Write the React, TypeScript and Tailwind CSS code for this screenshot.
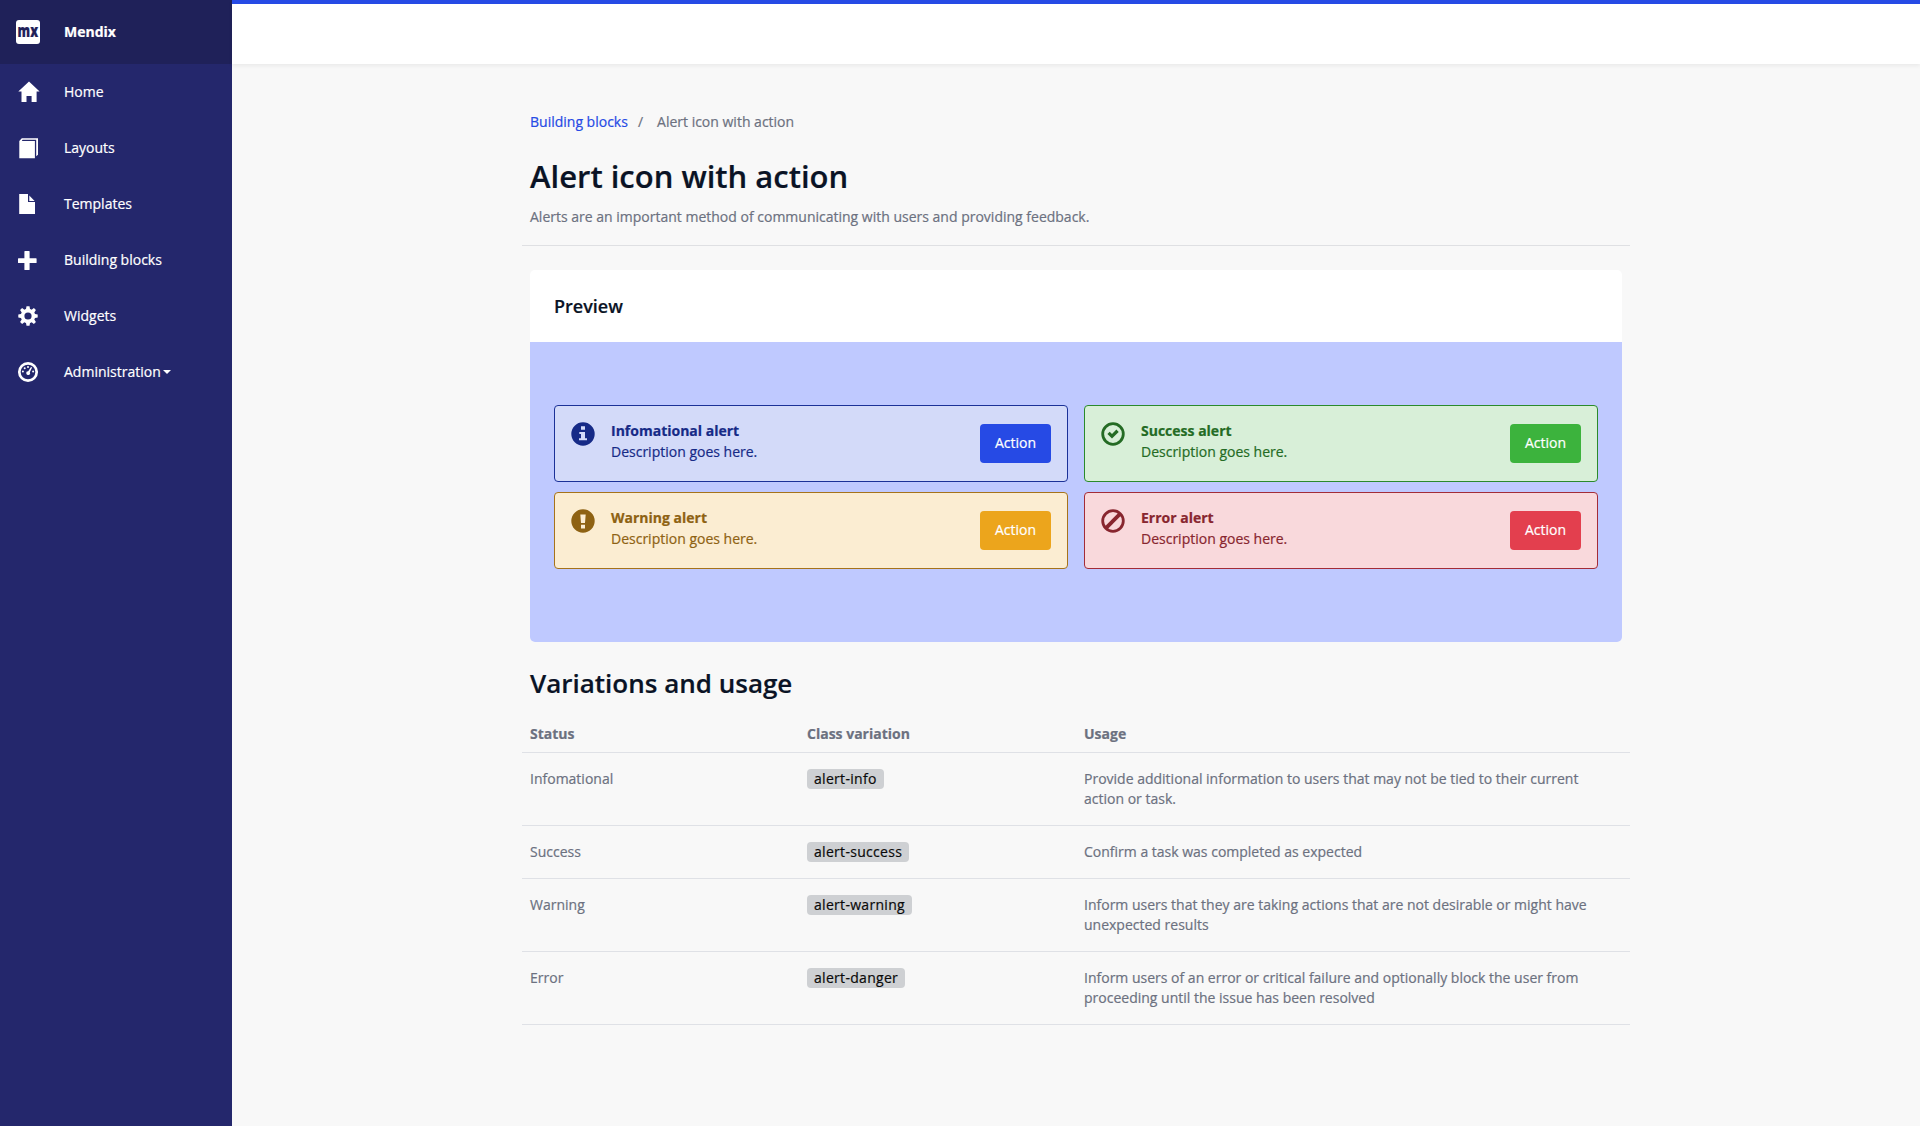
import React from "react";

const NAV_ICONS: Record<string, React.ReactNode> = {
  home: (
    <path d="M12 1.5 22.6 11.5H19.6V22H14.6V16H9.5V22H4.5V11.5H1.3Z" />
  ),
  layouts: (
    <path d="M2.3 5 4.8 2.2H21V18.8L19.2 20.3V3.8H5.6L4.8 4.9H17.9V22.2H2.3Z" />
  ),
  templates: <path d="M2.2 2H11V10H18V22H2.2ZM12.3 3.4 17.6 9H12.3Z" />,
  blocks: <path d="M8 3h4a.6.6 0 0 1 .6.6V10.2H19a.6.6 0 0 1 .6.6v3.6a.6.6 0 0 1-.6.6h-6.4v6.4a.6.6 0 0 1-.6.6H8a.6.6 0 0 1-.6-.6V15H1.6a.6.6 0 0 1-.6-.6v-3.6a.6.6 0 0 1 .6-.6H7.4V3.6A.6.6 0 0 1 8 3Z" />,
  widgets: (
    <g transform="translate(11 12)">
      <path
        fillRule="evenodd"
        d="M-1.5-9.7H1.5L2-7A7.2 7.2 0 0 1 3.6-6.3L5.9-7.9 7.9-5.9 6.3-3.6A7.2 7.2 0 0 1 7-2L9.7-1.5V1.5L7 2A7.2 7.2 0 0 1 6.3 3.6L7.9 5.9 5.9 7.9 3.6 6.3A7.2 7.2 0 0 1 2 7L1.5 9.7H-1.5L-2 7A7.2 7.2 0 0 1-3.6 6.3L-5.9 7.9-7.9 5.9-6.3 3.6A7.2 7.2 0 0 1-7 2L-9.7 1.5V-1.5L-7-2A7.2 7.2 0 0 1-6.3-3.6L-7.9-5.9-5.9-7.9-3.6-6.3A7.2 7.2 0 0 1-2-7ZM0-3.6A3.6 3.6 0 1 0 0 3.6 3.6 3.6 0 0 0 0-3.6Z"
      />
    </g>
  ),
  admin: (
    <g>
      <circle cx="11" cy="12" r="8.7" fill="none" stroke="currentColor" strokeWidth="2.7" />
      <circle cx="5.9" cy="11.6" r="1" />
      <circle cx="7.7" cy="8.3" r="1" />
      <circle cx="11" cy="7" r="1" />
      <circle cx="16.1" cy="11.6" r="1" />
      <path d="M14 7 15.1 7.5 12.8 12.2A1.9 1.9 0 1 1 11.2 11.2Z" />
    </g>
  ),
};

const NAV = [
  { label: "Home", icon: "home" },
  { label: "Layouts", icon: "layouts" },
  { label: "Templates", icon: "templates" },
  { label: "Building blocks", icon: "blocks" },
  { label: "Widgets", icon: "widgets" },
  { label: "Administration", icon: "admin", caret: true },
];

function Sidebar() {
  return (
    <aside className="w-[232px] shrink-0 bg-[#24276c] text-white">
      <div className="flex h-16 items-center bg-[#1f2159] pl-4">
        <div className="flex size-6 shrink-0 items-center justify-center rounded-[3px] bg-white">
          <span className="-mt-[4px] scale-x-[0.74] text-[17px] leading-none font-extrabold text-[#1f2159]">mx</span>
        </div>
        <span className="ml-6 text-sm font-bold">Mendix</span>
      </div>
      <nav>
        {NAV.map((n) => (
          <a key={n.label} className="flex h-14 items-center pl-[17px]">
            <svg viewBox="0 0 24 24" className="size-6 fill-current">
              {NAV_ICONS[n.icon]}
            </svg>
            <span className="ml-[23px] text-sm font-medium">{n.label}</span>
            {n.caret && (
              <svg viewBox="0 0 8 4" className="ml-[2px] h-1 w-2 fill-current">
                <path d="M0 0H8L4 4Z" />
              </svg>
            )}
          </a>
        ))}
      </nav>
    </aside>
  );
}

const InfoIcon = (
  <path fillRule="evenodd" d="M12 .3A11.7 11.7 0 1 0 12 23.7 11.7 11.7 0 0 0 12 .3ZM10 4.2H14V7.8H10ZM8.3 10H14V16.2H16V18.2H8V16.2H10V12H8.3Z" />
);
const WarningIcon = (
  <path fillRule="evenodd" d="M12 .3A11.7 11.7 0 1 0 12 23.7 11.7 11.7 0 0 0 12 .3ZM9.3 5.4H14.7L14 14H10ZM10 15.8H14V19.6H10Z" />
);
const SuccessIcon = (
  <>
    <circle cx="12" cy="12" r="10.3" fill="none" stroke="currentColor" strokeWidth="2.8" />
    <path d="M6.4 12 8.7 9.7 11 12 15.4 7.6 17.7 9.9 11 16.6Z" />
  </>
);
const ErrorIcon = (
  <>
    <circle cx="12" cy="12" r="10.3" fill="none" stroke="currentColor" strokeWidth="2.8" />
    <path d="M4.9 19.1 19.1 4.9" fill="none" stroke="currentColor" strokeWidth="3.8" />
  </>
);

const ALERTS = [
  { title: "Infomational alert", icon: InfoIcon, box: "border-[#1b3198] bg-[#d3daf9] text-[#162a87]", btn: "bg-[#264ae5]" },
  { title: "Success alert", icon: SuccessIcon, box: "border-[#2a8a2c] bg-[#d8efd8] text-[#246b24]", btn: "bg-[#3cb33d]" },
  { title: "Warning alert", icon: WarningIcon, box: "border-[#a6731a] bg-[#fbedd2] text-[#8e6213]", btn: "bg-[#eca51c]" },
  { title: "Error alert", icon: ErrorIcon, box: "border-[#a32c38] bg-[#f9d9dc] text-[#88262f]", btn: "bg-[#e33f4e]" },
];

const ROWS = [
  ["Infomational", "alert-info", "Provide additional information to users that may not be tied to their current action or task."],
  ["Success", "alert-success", "Confirm a task was completed as expected"],
  ["Warning", "alert-warning", "Inform users that they are taking actions that are not desirable or might have unexpected results"],
  ["Error", "alert-danger", "Inform users of an error or critical failure and optionally block the user from proceeding until the issue has been resolved"],
];

export default function App() {
  return (
    <div className="flex h-[1126px] w-[1920px] overflow-hidden bg-[#f8f8f8] font-['Open_Sans',sans-serif] text-sm text-[#6c7180] [-webkit-text-stroke:0.2px]">
      <Sidebar />
      <div className="flex grow flex-col">
        <header className="h-16 shrink-0 border-t-4 border-[#264ae5] bg-white shadow-[0_2px_4px_rgba(0,0,0,0.06)]" />
        <main className="mx-auto w-[1108px] pt-12">
          <div className="flex px-2 leading-5">
            <span className="text-[#264ae5]">Building blocks</span>
            <span className="ml-[10px]">/</span>
            <span className="ml-[14px]">Alert icon with action</span>
          </div>
          <h1 className="mt-6 px-2 text-[31px] leading-10 font-semibold text-[#0a1325]">Alert icon with action</h1>
          <p className="mt-[11px] px-2 leading-5">Alerts are an important method of communicating with users and providing feedback.</p>
          <hr className="mt-[18px] border-[#dfe0e3]" />
          <section className="mx-2 mt-6 overflow-hidden rounded-[5px] bg-white">
            <h3 className="flex h-[72px] items-center px-6 text-lg font-semibold text-[#0a1325]">Preview</h3>
            <div className="grid h-[300px] grid-cols-2 content-start gap-x-4 gap-y-[10px] bg-[#bfc9ff] px-6 pt-[63px]">
              {ALERTS.map((a) => (
                <div key={a.title} className={"flex h-[77px] items-start rounded-[4px] border px-4 " + a.box}>
                  <svg viewBox="0 0 24 24" className="mt-4 size-6 fill-current">
                    {a.icon}
                  </svg>
                  <div className="mt-[14px] ml-4 grow leading-[21px]">
                    <div className="font-bold">{a.title}</div>
                    <div>Description goes here.</div>
                  </div>
                  <button className={"mt-[18px] h-[39px] w-[71px] rounded-[4px] pb-px font-medium text-white " + a.btn}>Action</button>
                </div>
              ))}
            </div>
          </section>
          <h2 className="mt-[23px] px-2 text-[26px] leading-9 font-semibold text-[#0a1325]">Variations and usage</h2>
          <div className="mt-[23px] grid grid-cols-4 border-b border-[#dfe1e6] pb-2 leading-5 font-bold">
            <span className="px-2">Status</span>
            <span className="px-2">Class variation</span>
            <span className="px-2">Usage</span>
          </div>
          {ROWS.map(([status, cls, usage]) => (
            <div key={status} className="grid grid-cols-4 border-b border-[#dfe1e6] py-4 leading-5">
              <span className="px-2">{status}</span>
              <span className="flex items-start px-2">
                <span className="h-5 rounded-[4px] bg-[#ced0d3] px-[7px] tracking-[0.3px] text-[#0a0a0a]">{cls}</span>
              </span>
              <span className="col-span-2 px-2">{usage}</span>
            </div>
          ))}
        </main>
      </div>
    </div>
  );
}
